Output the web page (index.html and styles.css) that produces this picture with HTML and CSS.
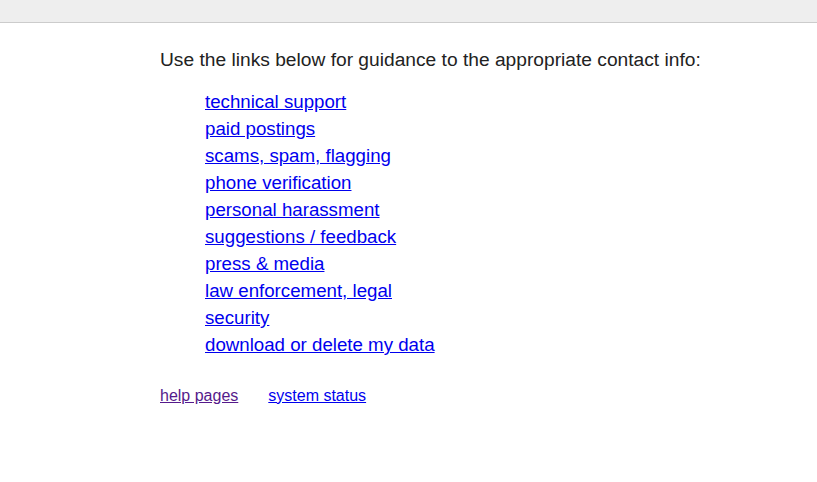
FILE: index.html
```html
<!DOCTYPE html>
<html lang="en">
<head>
  <meta charset="UTF-8" />
  <title>contact us</title>
  <link rel="stylesheet" href="styles.css">
</head>
<body>
  <div class="topbar"></div>

  <div class="page">
    <p class="intro">Use the links below for guidance to the appropriate contact info:</p>

    <ul class="contact-links">
      <li><a href="#tech">technical support</a></li>
      <li><a href="#paid">paid postings</a></li>
      <li><a href="#scams">scams, spam, flagging</a></li>
      <li><a href="#phone">phone verification</a></li>
      <li><a href="#harass">personal harassment</a></li>
      <li><a href="#feedback">suggestions / feedback</a></li>
      <li><a href="#press">press &amp; media</a></li>
      <li><a href="#legal">law enforcement, legal</a></li>
      <li><a href="#security">security</a></li>
      <li><a href="#data">download or delete my data</a></li>
    </ul>

    <div class="footer-links">
      <a class="visited" href="#help">help pages</a>
      <a href="#status">system status</a>
    </div>
  </div>
</body>
</html>
```

FILE: styles.css
```css
* {
  margin: 0;
  padding: 0;
  box-sizing: border-box;
}

body {
  font-family: 'Liberation Sans', Arial, sans-serif;
  color: #222222;
  background: #ffffff;
}

a {
  color: #0000ee;
}

a.visited {
  color: #551a8b;
}

.topbar {
  height: 23px;
  background: #eeeeee;
  border-bottom: 1px solid #cccccc;
}

.page {
  padding: 23px 0 0 160px;
}

.intro {
  font-size: 19.2px;
  line-height: 27px;
}

.contact-links {
  list-style: none;
  margin-top: 15px;
  padding-left: 45px;
  font-size: 18.7px;
  line-height: 27px;
}

.footer-links {
  display: flex;
  gap: 30px;
  margin-top: 28px;
  font-size: 16px;
  line-height: 20px;
}
```
